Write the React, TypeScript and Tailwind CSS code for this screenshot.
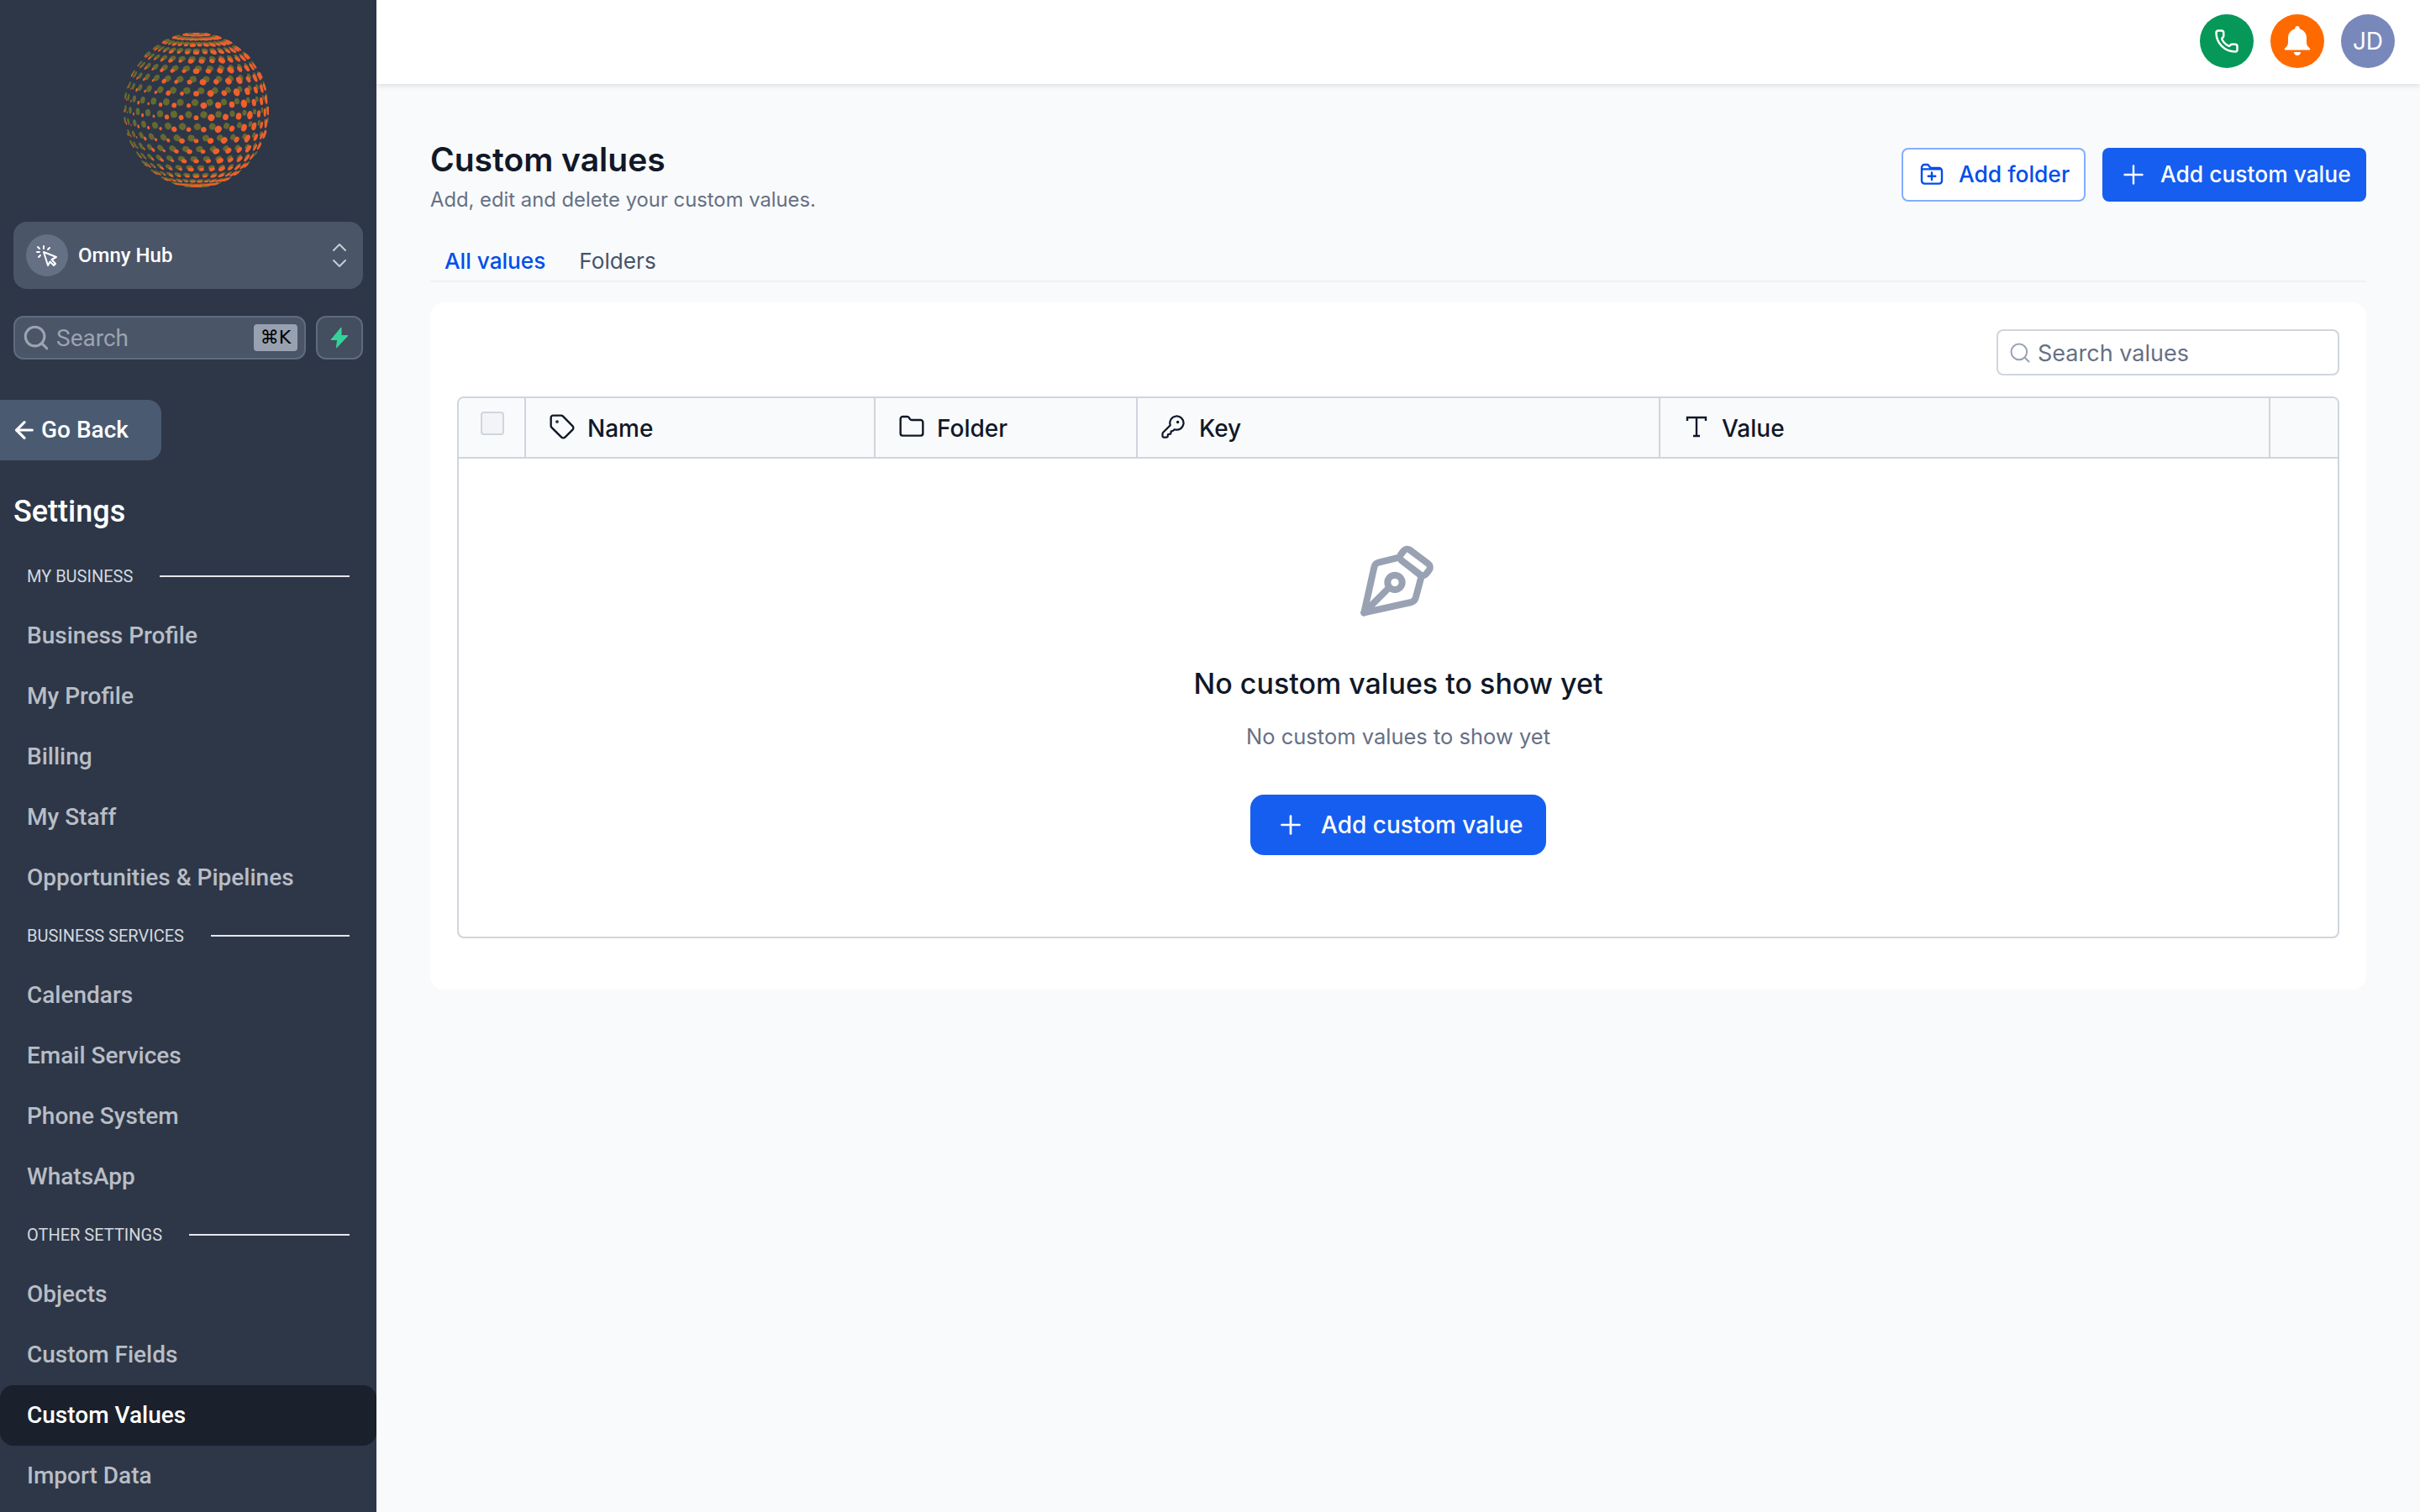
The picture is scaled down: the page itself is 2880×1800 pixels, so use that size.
import React from "react";
import { ArrowLeft, Search, Plus, Tag, Folder, KeyRound, Phone } from "lucide-react";

function Sphere() {
  const cx = 86.5, cy = 92, R = 86;
  const items: React.ReactElement[] = [];
  const tilt = 0.1;
  const project = (lat: number, lon: number) => {
    const x0 = Math.cos(lat) * Math.sin(lon);
    const y0 = Math.sin(lat);
    const z0 = Math.cos(lat) * Math.cos(lon);
    const y = y0 * Math.cos(tilt) - z0 * Math.sin(tilt);
    const z = y0 * Math.sin(tilt) + z0 * Math.cos(tilt);
    return { x: x0, y, z };
  };
  const rows = 20, cols = 30;
  const build = (color: string, latOff: number, lonOff: number, twist: number, size: (p: { x: number; y: number; z: number }, i: number, j: number) => number) => {
    for (let i = 0; i <= rows; i++) {
      const lat = -Math.PI / 2 + ((i + latOff) * Math.PI) / rows;
      for (let j = 0; j < cols; j++) {
        const lon = ((j + i * twist + lonOff) * 2 * Math.PI) / cols;
        const p = project(lat, lon);
        if (p.z <= 0.04) continue;
        const r = size(p, i, j);
        if (r <= 0.25) continue;
        const angle = (Math.atan2(p.y, p.x) * 180) / Math.PI;
        const X = cx + p.x * R;
        const Y = cy - p.y * R * 1.065;
        items.push(
          <ellipse key={color + i + "-" + j} cx={X} cy={Y} rx={r * Math.max(0.3, p.z)} ry={r} fill={color} transform={`rotate(${-angle} ${X} ${Y})`} />
        );
      }
    }
  };
  build("#66692f", 0.25, 0.3, 0.42, (p) => 4.2 - 1 * Math.max(0, p.x));
  build("#f15f2c", 0, 0, 0.5, (p, i, j) => {
    const wave = Math.sin(i * 1.7 + j * 2.3) * 0.5;
    return Math.max(0, 3.3 + 1.7 * p.x + wave);
  });
  return (
    <svg width="173" height="184" viewBox="0 0 173 184" className="ml-[18px]">
      {items}
    </svg>
  );
}

function NavItem({ label, active }: { label: string; active?: boolean }) {
  return (
    <div className={active ? "flex h-[72px] items-center rounded-2xl bg-[#1a202c] pl-8 text-[28px] font-medium text-white" : "flex h-[72px] items-center pl-8 text-[28px] font-medium text-[#b9bdc5]"}>
      {label}
    </div>
  );
}

function SectionLabel({ label, first }: { label: string; first?: boolean }) {
  return (
    <div className={first ? "flex h-[70px] items-center gap-8 pr-8 pl-8" : "flex h-[68px] items-center gap-8 pr-8 pl-8 pb-[3px]"}>
      <span className="text-[20px] whitespace-nowrap text-[#d5d8dd]">{label}</span>
      <span className="h-[2px] flex-1 bg-[#e5e7eb]" />
    </div>
  );
}

function HeaderCell({ width, icon, label }: { width?: string; icon: React.ReactNode; label: string }) {
  return (
    <div className={`flex h-full items-center gap-[14px] border-r-2 border-[#d0d5dd] pl-[27px] ${width ?? ""}`}>
      {icon}
      <span className="pt-[2px] text-[28px] font-medium text-[#101828]">{label}</span>
    </div>
  );
}

export default function App() {
  return (
    <div className="flex h-[1800px] w-[2880px] overflow-hidden bg-[#f9fafb] [font-family:Inter,sans-serif]">
      <aside className="flex h-full w-[448px] shrink-0 flex-col bg-[#2d3748] [font-family:Roboto,sans-serif]">
        <div className="flex h-[264px] items-start justify-center pt-[39px]">
          <Sphere />
        </div>
        <div className="mx-4 flex h-20 items-center rounded-2xl bg-[#4a5568] pr-[20px] pl-[15px]">
          <div className="flex h-[50px] w-[50px] items-center justify-center rounded-full bg-[#667085]">
            <svg width="50" height="50" viewBox="0 0 50 50" fill="none" stroke="white" strokeWidth="2" strokeLinecap="round" strokeLinejoin="round">
              <path d="M21 21L36 27L30.500 30L35 35L33 37L28.500 32.500L26 37Z" />
              <path d="M21 14v3M28 16l-2 2M14 15l2 2M13 21h3M15 27l2-2" />
            </svg>
          </div>
          <span className="ml-3 flex-1 text-[24px] font-medium text-white">Omny Hub</span>
          <svg width="16" height="30" viewBox="0 0 16 30" fill="none" stroke="#c7ccd4" strokeWidth="2" strokeLinecap="round" strokeLinejoin="round">
            <path d="M1 9l7-7 7 7" />
            <path d="M1 21l7 7 7-7" />
          </svg>
        </div>
        <div className="mx-4 mt-8 flex h-[52px] gap-3">
          <div className="flex flex-1 items-center rounded-xl border-2 border-[#5f6b7e] bg-[#4a5568] pr-2 pl-[8px]">
            <Search size={34} color="#9ca3af" strokeWidth={2.2} />
            <span className="ml-[7px] flex-1 pt-[2px] text-[28px] text-[#9ca3af]">Search</span>
            <span className="flex h-8 w-[52px] items-center justify-center rounded-[4px] bg-[#98a1b0] text-[22px] leading-none text-black [font-family:'DejaVu_Sans',sans-serif]">⌘K</span>
          </div>
          <div className="flex w-14 items-center justify-center rounded-xl border-2 border-[#5f6b7e] bg-[#434e5f]">
            <svg width="22" height="26" viewBox="0 0 22 26" fill="#34d399">
              <path d="M13 1L1 15.500h7.500L7.500 25 21 10.500h-8z" stroke="#34d399" strokeLinejoin="round" strokeWidth="1" />
            </svg>
          </div>
        </div>
        <div className="mt-12 flex h-[72px] w-[192px] items-center rounded-r-2xl bg-[#4a5a70] pl-[13px] text-[28px] font-medium text-white">
          <ArrowLeft size={32} strokeWidth={2.4} />
          <span className="ml-[4px]">Go Back</span>
        </div>
        <div className="mt-[35px] flex h-[52px] items-center pl-4 text-[36px] font-medium text-white">Settings</div>
        <div className="mt-[16px]">
          <SectionLabel label="MY BUSINESS" first />
        </div>
        <NavItem label="Business Profile" />
        <NavItem label="My Profile" />
        <NavItem label="Billing" />
        <NavItem label="My Staff" />
        <NavItem label="Opportunities & Pipelines" />
        <SectionLabel label="BUSINESS SERVICES" />
        <NavItem label="Calendars" />
        <NavItem label="Email Services" />
        <NavItem label="Phone System" />
        <NavItem label="WhatsApp" />
        <SectionLabel label="OTHER SETTINGS" />
        <NavItem label="Objects" />
        <NavItem label="Custom Fields" />
        <NavItem label="Custom Values" active />
        <NavItem label="Import Data" />
      </aside>

      <div className="flex h-full flex-1 flex-col">
        <header className="flex h-[100px] shrink-0 items-center justify-end gap-5 bg-white pr-[30px] pb-[2px] shadow-[0_2px_6px_rgba(16,24,40,0.12)]">
          <div className="flex h-16 w-16 items-center justify-center rounded-full bg-[#059858]">
            <Phone size={30} color="white" strokeWidth={2} />
          </div>
          <div className="flex h-16 w-16 items-center justify-center rounded-full bg-[#ff6a00]">
            <svg width="32" height="36" viewBox="0 0 32 36" fill="white">
              <path d="M16 0c1.600 0 2.800 1.200 2.800 2.800v.6C24 4.600 27 9 27 14v6c0 2.500 1.500 4.600 3.800 6.400 1 .8.5 2.100-.8 2.100H2c-1.300 0-1.800-1.300-.8-2.100C3.500 24.600 5 22.500 5 20v-6C5 9 8 4.600 13.200 3.400v-.6C13.200 1.200 14.400 0 16 0z" />
              <path d="M12 31h8c0 2.500-1.800 4-4 4s-4-1.500-4-4z" />
            </svg>
          </div>
          <div className="flex h-16 w-16 items-center justify-center rounded-full bg-[#7988bb] text-[28px] text-white">JD</div>
        </header>

        <main className="flex flex-1 flex-col pr-16 pl-16">
          <div className="mt-[64px] flex items-start justify-between">
            <div>
              <h1 className="text-[39px] leading-[52px] font-semibold text-[#101828]">Custom values</h1>
              <p className="mt-[6px] text-[23.8px] leading-8 text-[#667085]">Add, edit and delete your custom values.</p>
            </div>
            <div className="mt-3 flex gap-5">
              <button className="flex h-16 w-[219px] items-center rounded-lg border-2 border-[#84adff] bg-white pl-[18px] text-[26.4px] font-medium text-[#004eeb]">
                <svg width="32" height="32" viewBox="0 0 24 24" fill="none" stroke="#004eeb" strokeWidth="1.8" strokeLinecap="round" strokeLinejoin="round">
                  <path d="M3 8V5.500A2.500 2.500 0 0 1 5.500 3h3L11 6h7.500A2.500 2.500 0 0 1 21 8.500v9a2.500 2.500 0 0 1-2.500 2.500h-13A2.500 2.500 0 0 1 3 17.500V8zM3 7h17M12 10v6.500M8.800 13.300h6.400" />
                </svg>
                <span className="ml-[16px]">Add folder</span>
              </button>
              <button className="flex h-16 w-[314px] items-center rounded-lg bg-[#155eef] pl-[19px] text-[26.4px] font-medium text-white">
                <Plus size={36} strokeWidth={1.6} />
                <span className="ml-[14px]">Add custom value</span>
              </button>
            </div>
          </div>

          <div className="mt-[20px] flex h-[62px] items-end gap-[40px] border-b-2 border-[#eef0f3] pl-[17px] text-[26.2px] font-medium">
            <span className="pb-[4px] text-[#004eeb]">All values</span>
            <span className="pb-[4px] font-normal text-[#475467]">Folders</span>
          </div>

          <section className="mt-[24px] rounded-2xl bg-white px-8 pt-8 pb-[61px]">
            <div className="flex justify-end">
              <div className="flex h-[55px] w-[408px] items-center rounded-lg border-2 border-[#d0d5dd] bg-white pl-[12px] text-[27px] text-[#667085]">
                <Search size={28} color="#98a2b3" strokeWidth={1.7} />
                <span className="ml-[7px] pt-[3px]">Search values</span>
              </div>
            </div>
            <div className="mt-[25px] flex h-[645px] flex-col overflow-hidden rounded-lg border-2 border-[#d0d5dd]">
              <div className="flex h-[72px] shrink-0 items-center border-b-2 border-[#d0d5dd] bg-[#f9fafb]">
                <div className="flex h-full w-[80px] shrink-0 items-start border-r-2 border-[#d0d5dd] pt-[16px] pl-[26px]">
                  <span className="h-7 w-7 rounded border-2 border-[#d0d5dd] bg-[#f2f4f7]" />
                </div>
                <HeaderCell width="w-[416px]" icon={<Tag size={32} strokeWidth={1.8} color="#101828" className="mt-[-2px]" />} label="Name" />
                <HeaderCell width="w-[312px]" icon={<Folder size={32} strokeWidth={1.8} color="#101828" className="mt-[-2px]" />} label="Folder" />
                <HeaderCell width="w-[622px]" icon={<KeyRound size={30} strokeWidth={1.8} color="#101828" className="mt-[-2px] mr-[2px]" />} label="Key" />
                <HeaderCell width="w-[726px]" icon={
                  <svg width="32" height="32" viewBox="0 0 32 32" fill="none" stroke="#101828" strokeWidth="2.400" className="mt-[-2px]">
                    <path d="M5 9V5h22v4M16 5v22M12 27h8" />
                  </svg>
                } label="Value" />
                <div className="flex-1" />
              </div>
              <div className="flex flex-1 flex-col items-center pt-[90px]">
                <svg width="110" height="110" viewBox="0 0 330 330" fill="none" stroke="#98a2b3" strokeWidth="24" strokeLinejoin="round" strokeLinecap="round" className="ml-[2px]">
                  <path d="M40 280L76 118Q79 104 92 101L165 83L245 150L224 228Q220 240 208 243Z" />
                  <rect x="165" y="76" width="114" height="48" rx="16" transform="rotate(37 222 100)" fill="white" />
                  <circle cx="150" cy="172" r="26" />
                  <path d="M40 280L128 192" />
                </svg>
                <div className="mt-[44px] text-[34px] leading-[48px] font-medium text-[#101828]">No custom values to show yet</div>
                <div className="mt-[21px] text-[25.5px] leading-9 text-[#667085]">No custom values to show yet</div>
                <button className="mt-[51px] flex h-[72px] w-[352px] items-center rounded-2xl bg-[#155eef] pl-[30px] text-[28px] font-medium text-white">
                  <Plus size={36} strokeWidth={1.8} />
                  <span className="ml-[18px]">Add custom value</span>
                </button>
              </div>
            </div>
          </section>
        </main>
      </div>
    </div>
  );
}
